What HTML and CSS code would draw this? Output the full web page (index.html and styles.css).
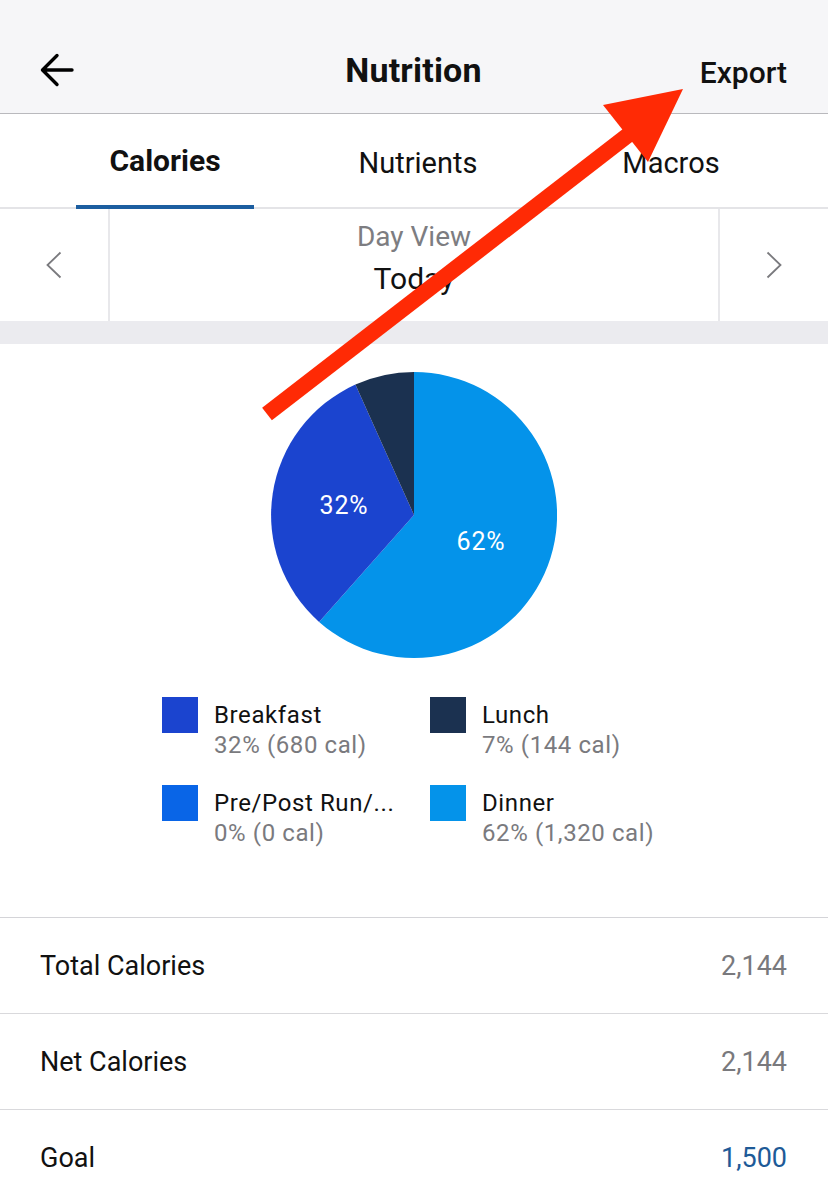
FILE: index.html
```html
<!DOCTYPE html>
<html lang="en">
<head>
  <meta charset="UTF-8" />
  <title>Nutrition</title>
  <meta name="viewport" content="width=device-width, initial-scale=1.0" />
  <link rel="stylesheet" href="styles.css">
</head>
<body>
  <div class="screen">

    <header class="nav-bar">
      <button class="nav-back" title="Back">
        <svg width="34" height="34" viewBox="0 0 34 34">
          <path d="M32 17 H3 M17 2.5 L2.5 17 L17 31.5" fill="none" stroke="#000" stroke-width="3.4" stroke-linecap="round" stroke-linejoin="round" />
        </svg>
      </button>
      <h1 class="nav-title">Nutrition</h1>
      <a class="nav-action" href="#">Export</a>
    </header>

    <nav class="tabs">
      <a class="tab tab-active" href="#">Calories</a>
      <a class="tab" href="#">Nutrients</a>
      <a class="tab" href="#">Macros</a>
    </nav>

    <div class="date-bar">
      <button class="date-step date-prev" title="Previous day">
        <svg width="16" height="28" viewBox="0 0 16 28">
          <path d="M14.5 1.5 L1.5 14 L14.5 26.5" fill="none" stroke="#7a7a7e" stroke-width="1.8" />
        </svg>
      </button>
      <div class="date-label">
        <span class="date-mode">Day View</span>
        <span class="date-value">Today</span>
      </div>
      <button class="date-step date-next" title="Next day">
        <svg width="16" height="28" viewBox="0 0 16 28">
          <path d="M1.5 1.5 L14.5 14 L1.5 26.5" fill="none" stroke="#7a7a7e" stroke-width="1.8" />
        </svg>
      </button>
    </div>

    <div class="band"></div>

    <section class="chart">
      <svg class="pie" width="286" height="286" viewBox="0 0 286 286">
        <!-- dinner 61.6%, breakfast 31.7%, lunch 6.7%, clockwise from 12 o'clock -->
        <path d="M143 143 L143 0 A143 143 0 1 1 48.1 249.9 Z" fill="#0493ea" />
        <path d="M143 143 L48.1 249.9 A143 143 0 0 1 84.4 12.6 Z" fill="#1b44cf" />
        <path d="M143 143 L84.4 12.6 A143 143 0 0 1 143 0 Z" fill="#1b3150" />
        <text class="pie-label" x="73" y="142">32%</text>
        <text class="pie-label" x="210" y="178">62%</text>
      </svg>

      <ul class="legend">
        <li class="legend-item">
          <span class="swatch swatch-breakfast"></span>
          <div class="legend-text">
            <span class="legend-name">Breakfast</span>
            <span class="legend-value">32% (680 cal)</span>
          </div>
        </li>
        <li class="legend-item">
          <span class="swatch swatch-lunch"></span>
          <div class="legend-text">
            <span class="legend-name">Lunch</span>
            <span class="legend-value">7% (144 cal)</span>
          </div>
        </li>
        <li class="legend-item">
          <span class="swatch swatch-snack"></span>
          <div class="legend-text">
            <span class="legend-name">Pre/Post Run/...</span>
            <span class="legend-value">0% (0 cal)</span>
          </div>
        </li>
        <li class="legend-item">
          <span class="swatch swatch-dinner"></span>
          <div class="legend-text">
            <span class="legend-name">Dinner</span>
            <span class="legend-value">62% (1,320 cal)</span>
          </div>
        </li>
      </ul>
    </section>

    <ul class="summary">
      <li class="summary-row">
        <span>Total Calories</span>
        <span class="summary-value">2,144</span>
      </li>
      <li class="summary-row">
        <span>Net Calories</span>
        <span class="summary-value">2,144</span>
      </li>
      <li class="summary-row">
        <span>Goal</span>
        <span class="summary-value summary-goal">1,500</span>
      </li>
    </ul>

    <!-- red annotation arrow drawn over the screenshot -->
    <svg class="annotation" width="828" height="1194" viewBox="0 0 828 1194">
      <line x1="267" y1="414" x2="632" y2="132" stroke="#ff2a05" stroke-width="16" />
      <polygon points="683,89 603,105 648,162" fill="#ff2a05" />
    </svg>

  </div>
</body>
</html>
```

FILE: styles.css
```css
html, body {
  margin: 0;
  padding: 0;
  background: white;
  font-family: Roboto, 'Liberation Sans', sans-serif;
  color: #111;
}

ul {
  list-style: none;
  margin: 0;
  padding: 0;
}

a {
  color: inherit;
  text-decoration: none;
}

button {
  background: transparent;
  border: none;
  padding: 0;
  cursor: pointer;
}

.screen {
  position: relative;
  width: 828px;
  height: 1194px;
  overflow: hidden;
}

/* Top bar */
.nav-bar {
  height: 114px;
  box-sizing: border-box;
  padding: 27px 41px 0 40px;
  display: grid;
  grid-template-columns: 1fr auto 1fr;
  align-items: center;
  background: #f6f6f8;
  border-bottom: 1px solid #b9b9bd;
}

.nav-back {
  justify-self: start;
  display: flex;
}

.nav-title {
  margin: 0;
  font-size: 34px;
  font-weight: 700;
  letter-spacing: 0.2px;
}

.nav-action {
  justify-self: end;
  font-size: 30px;
  font-weight: 500;
  margin-top: 4px;
}

/* Tabs */
.tabs {
  height: 93px;
  display: flex;
  gap: 75px;
  padding-left: 76px;
  border-bottom: 2px solid #e4e4e7;
}

.tab {
  width: 178px;
  height: 95px;
  box-sizing: border-box;
  padding-top: 2px;
  display: flex;
  align-items: center;
  justify-content: center;
  font-size: 29px;
}

.tab-active {
  font-size: 30px;
  font-weight: 700;
  border-bottom: 4px solid #1c5ea0;
}

/* Day selector */
.date-bar {
  height: 112px;
  display: flex;
}

.date-step {
  width: 110px;
  display: flex;
  align-items: center;
  justify-content: center;
}

.date-prev {
  border-right: 2px solid #e8e8eb;
}

.date-next {
  border-left: 2px solid #e8e8eb;
}

.date-label {
  flex: 1;
  display: flex;
  flex-direction: column;
  align-items: center;
  padding-top: 12px;
}

.date-mode {
  font-size: 28px;
  line-height: 32px;
  color: #7d7d81;
}

.date-value {
  font-size: 30px;
  line-height: 44px;
  margin-top: 4px;
}

.band {
  height: 23px;
  background: #ebebef;
}

/* Pie chart and legend */
.chart {
  display: flex;
  flex-direction: column;
  align-items: center;
  padding: 28px 0 69px;
  border-bottom: 1px solid #d4d4d8;
}

.pie-label {
  font-size: 25px;
  letter-spacing: 0.8px;
  fill: white;
  text-anchor: middle;
}

.legend {
  align-self: stretch;
  margin-top: 39px;
  padding-left: 162px;
  display: grid;
  grid-template-columns: 268px 268px;
  row-gap: 25px;
}

.legend-item {
  display: flex;
  gap: 16px;
}

.swatch {
  width: 36px;
  height: 36px;
  flex-shrink: 0;
}

.swatch-breakfast { background: #1b44cf; }
.swatch-lunch { background: #1b3150; }
.swatch-snack { background: #0965e7; }
.swatch-dinner { background: #0493ea; }

.legend-text {
  display: flex;
  flex-direction: column;
  padding-top: 3px;
  font-size: 24px;
  letter-spacing: 0.6px;
  line-height: 30px;
  white-space: nowrap;
}

.legend-value {
  color: #7a7a7e;
}

/* Totals */
.summary-row {
  height: 95px;
  padding: 0 41px 0 40px;
  display: flex;
  align-items: center;
  justify-content: space-between;
  font-size: 27px;
  border-bottom: 1px solid #d9d9dc;
}

.summary-value {
  color: #79797d;
}

.summary-goal {
  color: #1e5a97;
}

/* Annotation overlay */
.annotation {
  position: absolute;
  top: 0;
  left: 0;
  pointer-events: none;
}
```
